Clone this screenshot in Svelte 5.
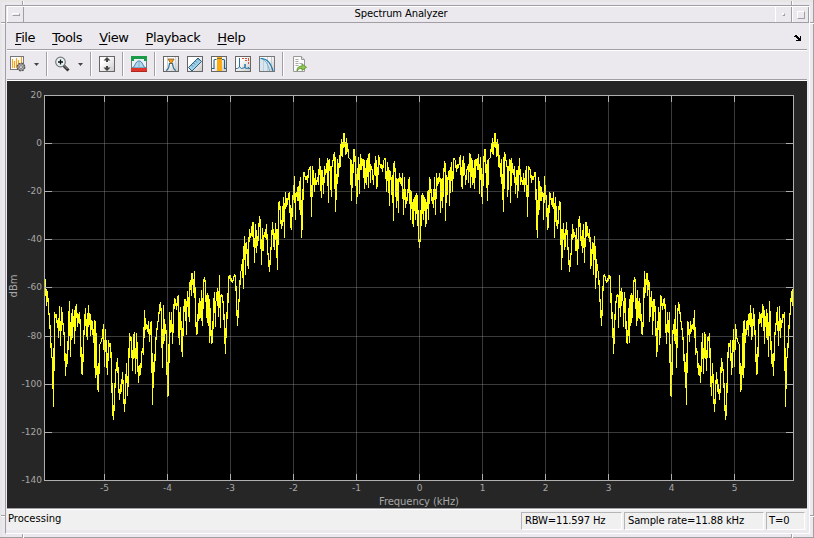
<script>
  const menus = ["File", "Tools", "View", "Playback", "Help"]

  const yTicks = [20, 0, -20, -40, -60, -80, -100, -120, -140]
  const xTicks = [-5, -4, -3, -2, -1, 0, 1, 2, 3, 4, 5]

  // plot box inside the scope area
  const left = 37.5
  const right = 786.5
  const top = 14.5
  const bottom = 399.5
  const center = 412

  const tickX = (k) => Math.round(center + k * 63.05) + 0.5
  const tickY = (db) => Math.round(14 + (20 - db) * 2.406) + 0.5

  // Negative half of the spectrum, one entry per pixel column, in thirds of a
  // pixel below y. A pair means the trace goes down and up in the same column.
  const chunks = [
    { x: 38, y: 169, t: [88, 167, 122, 178, 205, 255, 317, 330, 472, 186, 205, 193, 235, [215, 263], 168, 287, 172, 208, 235, 265, 377, 312, 343, 228, 154, 320, 190, [265, 178], 230, [180, 282], 180, 162, 230, 200, 187, 243, 368, 374, 275, 220, 175, 260, [190, 269], 166, 225, [192, 257], 211, 213, 280, [210, 308], [384, 213], 308, 415, 425, 285, 280, 272, 258, 222, 350, 238, 320, 374, 270, 292, 280, 350, 478, 509, 440, 372, 350, 325, 395, 449, 403, 425, 365, 427, 485, 422, 340, 437, 370, 249, 272, 262, 364, 265, 245, 372, 250, 315, 398, 346, 374, 318, 293, 316, 181, 240, 222, 245, 212, 275, 222, 212, 464, 335, 365, 280, 250, 225, 205, 172, 157, 200, 353, 166, 272, 222, 270, 440, 435] },
    { x: 162, y: 119, t: [336, 398, 336, 431, 345, 294, 300, 330, 295, [285, 380], [434, 356], 322, 430, [470, 440], 352, 297, [360, 297], [405, 350], 273, 323, [366, 258], 240, [288, 220], 220, 278, 213, 343, 404, 395, 308, [358, 295], 355, [270, 343], 377, 243, 232, 255, 335, [368, 280], 295, [428, 296], 366, 432, 425, 325, 276, [380, 304], 300, 263, 350, 225, [383, 297], 283, 292, 318, 385, 461, 336, 356, 232, 226, [242, 226], 245, 248, 235, 222, 230, 300, 377, 320, 283, 213, 213, 178, [266, 190], 108, [225, 135], 125, 185, [207, 148], 87, 115, 98, 67, [136, 67], 188, 73, [158, 90], 137, 100, 48, 70, 194, 85, [153, 120], 95, 115, 72, 150, 173, 216, 160, 130, 65, 125, 150, 70, 118, 210] },
    { x: 271, y: 39, t: [250, 243, 285, 328, 300, 230, [353, 300], 217, 260, 250, 225, 217, 315, 330, 225, 240, 168, [300, 228], 215, [242, 210], 197, [270, 200], 172, 353, 290, 155, 160, 180, 168, 188, 153, 145, 138, 290, [138, 223], 150, 215, [160, 193], 195, 170, 196, 115, 178, [233, 150], 150, 222, 138, 165, 150, 115, [248, 125], 117, 175, [230, 150], 130, 113, 97, [275, 112], 240, 117, 170] },
    { x: 332, y: 39, t: [105, [142, 100], [57, 100], 112, 40, 40, [105, 98], [55, 103], 68, 115, 115, 120, [242, 120], 205, 87, 90, [148, 108], 252, 200, 112, [223, 180], 103, [150, 115], 118, [150, 118], [207, 120], 180, [196, 130], 115, [205, 105], 98, [190, 135], 140, 155, [195, 165], 165, 108, [206, 120], 200, 105, 122, 145, 133, 155, 125, 115, 115, 215, 127, 160, [257, 150], 160, 190, [245, 165], [302, 138], 123, 175, [263, 175], 180, [280, 200], 160, 185, 198, 160, 284, 172, 265, 230, 243, 183, 172, [300, 210], 215, 298, [322, 250], 230, [300, 230], 220, [318, 225], 340, 383] },
  ]

  const half = []
  for (const c of chunks) {
    c.t.forEach((v, i) => {
      const ys = [v].flat().map((d) => c.y + d / 3)
      half.push({ x: c.x + i + 0.5, ys })
    })
  }
  // the spectrum of a real signal is symmetric around 0 Hz
  const mirrored = half.slice(0, -1).reverse().map((p) => ({ x: 2 * center + 1 - p.x, ys: [...p.ys].reverse() }))
  const columns = [...half, ...mirrored]

  // every column becomes one solid run that reaches over halfway to its neighbours
  const reach = 0.62
  const trace = columns.map((p, i) => {
    const first = p.ys[0]
    const last = p.ys[p.ys.length - 1]
    const all = [...p.ys]
    if (i > 0) all.push(first + (columns[i - 1].ys.at(-1) - first) * reach)
    if (i < columns.length - 1) all.push(last + (columns[i + 1].ys[0] - last) * reach)
    const y1 = Math.round(Math.min(...all))
    const y2 = Math.max(Math.round(Math.max(...all)), y1 + 1)
    return `M${p.x} ${y1}V${y2}`
  }).join("")
</script>

<div class="desktop">
  <div class="window">
    <div class="titlebar">
      <span class="tbtn"><i class="dash"></i></span>
      <span class="title">Spectrum Analyzer</span>
      <span class="tbtn"><i class="dot"></i></span>
      <span class="tbtn last"><i class="box"></i></span>
    </div>

    <div class="menubar">
      {#each menus as m}
        <span class="menu"><u>{m[0]}</u>{m.slice(1)}</span>
      {/each}
      <svg class="dock" width="8" height="6" viewBox="0 0 8 6" shape-rendering="crispEdges">
        <path d="M0 1h1v-1h2v1h1v1h1v1h1v-2h1v5h-5v-1h2v-1h-1v-1h-1v-1h-2z" />
      </svg>
    </div>

    <div class="toolbar">
      <svg width="16" height="16" viewBox="0 0 16 16">
        <rect x=".5" y=".5" width="13" height="13" fill="#fff" stroke="#777" />
        <path d="M2.5 3v9M4.5 5v7M6.5 2v10M8.5 4v8M11.5 1v6" stroke="#f5a51d" stroke-width="1.2" />
        <circle cx="11" cy="11" r="3.6" fill="#bbb" stroke="#555" stroke-width="1.6" stroke-dasharray="2 .8" />
        <circle cx="11" cy="11" r="3.2" fill="#b5b5b5" stroke="#666" stroke-width=".7" />
        <circle cx="11" cy="11" r="1.4" fill="#fff" stroke="#555" stroke-width=".7" />
      </svg>
      <svg class="caret" width="5" height="3" viewBox="0 0 5 3"><path d="M0 0h5l-2.5 3z" /></svg>
      <i class="sep"></i>
      <svg width="15" height="16" viewBox="0 0 15 16">
        <path d="M8.5 9.5l5 5" stroke="#333" stroke-width="3" />
        <path d="M8.5 9l4 4" stroke="#999" stroke-width="1" />
        <circle cx="5.5" cy="6" r="4.8" fill="#e6f4f6" stroke="#777" stroke-width="1.2" />
        <path d="M5.5 3.5v5M3 6h5" stroke="#111" stroke-width="1.3" />
      </svg>
      <svg class="caret" width="5" height="3" viewBox="0 0 5 3"><path d="M0 0h5l-2.5 3z" /></svg>
      <i class="sep"></i>
      <svg width="16" height="16" viewBox="0 0 16 16">
        <defs>
          <linearGradient id="face" x1="0" y1="0" x2="1" y2="1">
            <stop offset=".3" stop-color="#fff" />
            <stop offset="1" stop-color="#c8c8c8" />
          </linearGradient>
        </defs>
        <rect x=".5" y=".5" width="15" height="15" fill="url(#face)" stroke="#666" />
        <path d="M8 1l3.500 3.500H9V6H7V4.500H4.500zM8 15l3.500-3.500H9V10H7v1.500H4.500z" fill="#444" />
      </svg>
      <i class="sep"></i>
      <svg width="16" height="16" viewBox="0 0 16 16">
        <rect x=".5" y=".5" width="15" height="15" fill="#e8f1f6" stroke="#777" />
        <path d="M0 0h16v5h-3V3H3v2H0z" fill="#1b9a48" />
        <path d="M1 12c3 0 3-7 7-7s4 7 7 7z" fill="#b5d7ec" stroke="#3b7ca8" />
        <path d="M8 5v7" stroke="#7eb4d5" />
        <rect y="12" width="16" height="4" fill="#e0352b" />
        <path d="M0 15.500h16" stroke="#b52620" />
      </svg>
      <i class="sep"></i>
      <svg width="16" height="16" viewBox="0 0 16 16">
        <rect x=".5" y=".5" width="15" height="15" fill="url(#face)" stroke="#666" />
        <path d="M4.500 1v14M12.500 1v14" stroke="#d0d0d0" />
        <path d="M3 14.500c3-1 3-4 3.500-7h3c.5 3 .5 6 3.500 7" fill="none" stroke="#2e6f9c" stroke-width="1.2" />
        <path d="M5 3h6L8 8z" fill="#f6a21b" stroke="#7c4b12" stroke-width=".7" />
      </svg>
      <svg class="next" width="16" height="16" viewBox="0 0 16 16">
        <rect x=".5" y=".5" width="15" height="15" fill="url(#face)" stroke="#666" />
        <path d="M1.500 11.500L11 2l3.500 3.500L5 15z" fill="#9fd0ea" stroke="#2d5f80" />
        <path d="M4.500 9l1.500 1.500M6.500 7L8 8.500M8.500 5l1.500 1.500M10.500 3L12 4.500" stroke="#2d5f80" stroke-width=".8" />
      </svg>
      <svg class="next" width="16" height="16" viewBox="0 0 16 16">
        <rect x=".5" y=".5" width="15" height="15" fill="url(#face)" stroke="#666" />
        <path d="M1 12.500h2V4.500q0-1 1-1h1.500M15 12.500h-1.500V4.500q0-1-1-1H11" fill="none" stroke="#245f8c" stroke-width="1.100" />
        <rect x="6" y="1" width="5" height="14" fill="#fbab12" />
        <path d="M6 2.500h5" stroke="#8a6a2a" />
      </svg>
      <svg class="next" width="16" height="16" viewBox="0 0 16 16">
        <rect x=".5" y=".5" width="15" height="15" fill="url(#face)" stroke="#666" />
        <path d="M1 12.500h1.500l2-1.500V2v9l2 1.500 3.500-1V8v4l2.500.5 1-1.500v1.500H15" fill="none" stroke="#2673a5" />
        <path d="M7 2.500h7M13.500 3v6M10 4.500h2" stroke="#d8532e" stroke-dasharray="2 1" />
      </svg>
      <svg class="next" width="16" height="16" viewBox="0 0 16 16">
        <rect x=".5" y=".5" width="15" height="15" fill="url(#face)" stroke="#777" />
        <path d="M1 15V3c4 0 9 5 9 12z" fill="#d5e7f3" />
        <path d="M4.500 3v12M8.500 1v14M12.500 1v14" stroke="#c8ccd0" />
        <path d="M1 2.500c5 0 8.500 6 9.500 12.500" fill="none" stroke="#6eaacb" />
        <path d="M2 2.500c7 0 10 5 12 12.500" fill="none" stroke="#1976ae" stroke-width="1.200" />
      </svg>
      <i class="sep"></i>
      <svg class="export" width="16" height="16" viewBox="0 0 16 16">
        <path d="M1.500.5h8l3 3v12h-11z" fill="#fafafa" stroke="#999" />
        <path d="M9.500.5v3h3" fill="#ddd" stroke="#999" />
        <path d="M3.500 3.500h4M3.500 5.500h4M3.500 7.500h7M3.500 9.500h3" stroke="#aaa" stroke-dasharray="3 1" />
        <path d="M5 15c0-4 2-4.800 5-4.800V8l4.500 3.300L10 14.500v-2c-2 0-3 0-5 2.500z" fill="#8fc750" stroke="#528a2c" stroke-width=".8" />
      </svg>
    </div>

    <svg class="scope" width="800" height="428" viewBox="0 0 800 428">
      <g shape-rendering="crispEdges">
        <rect x={left} y={top} width={right - left} height={bottom - top} fill="#000" />
        <path class="trace" d={trace} />
        {#each xTicks as k}
          <line class="grid" x1={tickX(k)} x2={tickX(k)} y1={top} y2={bottom} />
          <path class="axis" d="M{tickX(k)} {top}v6.500M{tickX(k)} {bottom}v-6.500" />
        {/each}
        {#each yTicks.slice(1, -1) as db}
          <line class="grid" x1={left} x2={right} y1={tickY(db)} y2={tickY(db)} />
          <path class="axis" d="M{left} {tickY(db)}h7.500M{right} {tickY(db)}h-7.500" />
        {/each}
        <rect class="axis" x={left} y={top} width={right - left} height={bottom - top} />
      </g>
      {#each yTicks as db}
        <text class="tick" x="35" y={tickY(db) + 2.5} text-anchor="end">{db}</text>
      {/each}
      {#each xTicks as k}
        <text class="tick" x={tickX(k)} y="410" text-anchor="middle">{k}</text>
      {/each}
      <text class="label" x="412" y="424" text-anchor="middle" textLength="80">Frequency (kHz)</text>
      <text class="label" transform="translate(10 205) rotate(-90)" text-anchor="middle">dBm</text>
    </svg>

    <div class="status">
      <span class="state">Processing</span>
      <span class="cell rbw">RBW=11.597 Hz</span>
      <span class="cell rate">Sample rate=11.88 kHz</span>
      <span class="cell time">T=0</span>
    </div>
  </div>

  <!-- resize handle notches of the window frame -->
  <i class="notch v" style:left="22px" style:top="1px"></i>
  <i class="notch v" style:left="791px" style:top="1px"></i>
  <i class="notch v" style:left="22px" style:top="534px"></i>
  <i class="notch v" style:left="791px" style:top="534px"></i>
  <i class="notch h" style:left="1px" style:top="22px"></i>
  <i class="notch h" style:left="810px" style:top="22px"></i>
  <i class="notch h" style:left="1px" style:top="515px"></i>
  <i class="notch h" style:left="810px" style:top="515px"></i>
</div>

<style>
  :global(body) {
    margin: 0;
    overflow: hidden;
  }

  .desktop {
    position: relative;
    box-sizing: border-box;
    width: 814px;
    height: 538px;
    padding: 5px 3px 3px 5px;
    background: #ebe9ed;
    border-right: 1px solid #a19fa4;
    border-bottom: 1px solid #a19fa4;
    box-shadow: inset 2px 2px #e6e6e6;
    font-family: "DejaVu Sans", sans-serif;
    color: #000;
  }

  .window {
    box-sizing: border-box;
    width: 805px;
    height: 529px;
    border: 1px solid #a19fa4;
    border-right-color: #fff;
    border-bottom-color: #fff;
    padding: 0 2px 0 1px;
  }

  .titlebar {
    display: flex;
    box-sizing: border-box;
    height: 17px;
    margin-right: -2px;
    border-top: 1px solid #fff;
    border-bottom: 1px solid #a19fa4;
  }

  .tbtn {
    box-sizing: border-box;
    display: flex;
    align-items: center;
    justify-content: center;
    width: 17px;
    border-left: 1px solid #fff;
    border-right: 1px solid #a19fa4;
  }

  .dash {
    width: 6px;
    height: 1px;
    border: 1px solid #fff;
    border-right-color: #a19fa4;
    border-bottom-color: #a19fa4;
  }

  .dot {
    width: 1px;
    height: 1px;
    border: 1px solid #fff;
    border-right-color: #a19fa4;
    border-bottom-color: #a19fa4;
  }

  .box {
    width: 6px;
    height: 6px;
    border: 1px solid #fff;
    border-right-color: #a19fa4;
    border-bottom-color: #a19fa4;
  }

  .title {
    flex: 1;
    padding-left: 3px;
    font-size: 10px;
    line-height: 14px;
    letter-spacing: -0.14px;
    text-align: center;
  }

  .menubar {
    display: flex;
    box-sizing: border-box;
    height: 28px;
    padding: 7px 5px 0 8px;
    border-bottom: 1px solid #fff;
    box-shadow: inset 0 -1px #a19fa4;
    font-size: 13px;
    line-height: 16px;
    letter-spacing: -0.4px;
  }

  .menu {
    margin-right: 17px;
  }

  u {
    text-underline-offset: 2px;
  }

  .dock {
    margin: 5px 0 0 auto;
  }

  .toolbar {
    display: flex;
    align-items: center;
    box-sizing: border-box;
    height: 30px;
    padding: 0 0 3px 3px;
    border-bottom: 1px solid #fff;
    box-shadow: inset 0 -1px #a19fa4;
  }

  .caret {
    margin-left: 8px;
    fill: #444;
  }

  .sep {
    width: 1px;
    height: 24px;
    margin: 0 7px;
    background: #a19fa4;
    border-right: 1px solid #fff;
  }

  .next {
    margin-left: 8px;
  }

  .export {
    margin-left: 1px;
  }

  .scope {
    display: block;
    background: #262626;
  }

  .grid {
    stroke: rgba(175, 175, 175, 0.33);
  }

  .axis {
    fill: none;
    stroke: #afafaf;
  }

  .trace {
    fill: none;
    stroke: #ffff11;
  }

  .tick {
    font-size: 9px;
    fill: #a6a6a6;
  }

  .label {
    font-size: 10px;
    fill: #a6a6a6;
  }

  .status {
    display: flex;
    box-sizing: border-box;
    height: 21px;
    padding: 2px 2px 0 1px;
    border-top: 1px solid #fff;
    box-shadow: 0 -1px #a19fa4;
    background: #f0f0f0;
    font-size: 10px;
  }

  .state {
    flex: 1;
    line-height: 14px;
  }

  .cell {
    box-sizing: border-box;
    height: 18px;
    line-height: 15px;
    padding-left: 3px;
    margin-left: 2px;
    border: 1px solid #b5b5b5;
    border-right-color: #fff;
    border-bottom-color: #fff;
    letter-spacing: -0.18px;
    white-space: nowrap;
  }

  .rbw {
    width: 101px;
  }

  .rate {
    width: 140px;
  }

  .time {
    width: 39px;
    padding-left: 2px;
  }

  .notch {
    position: absolute;
    background: #a19fa4;
  }

  .notch.v {
    width: 1px;
    height: 4px;
    border-right: 1px solid #fff;
  }

  .notch.h {
    width: 4px;
    height: 1px;
    border-bottom: 1px solid #fff;
  }
</style>
